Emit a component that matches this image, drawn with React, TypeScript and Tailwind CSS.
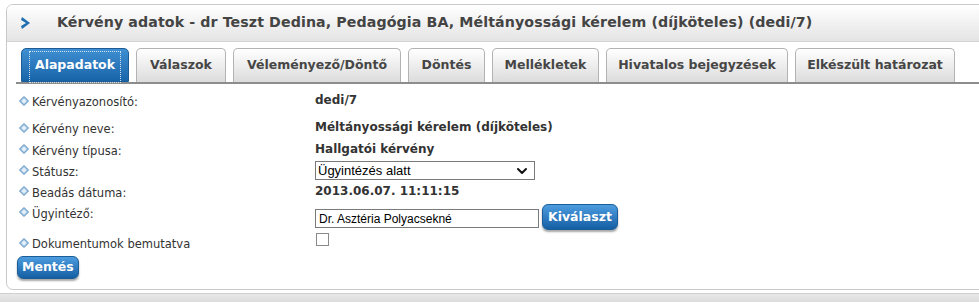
import { ChevronDown } from "lucide-react";

const tabs = [
  { label: "Alapadatok", w: "w-[108px]" },
  { label: "Válaszok", w: "w-[90px]" },
  { label: "Véleményező/Döntő", w: "w-[168px]" },
  { label: "Döntés", w: "w-[77px]" },
  { label: "Mellékletek", w: "w-[107px]" },
  { label: "Hivatalos bejegyzések", w: "w-[182px]" },
  { label: "Elkészült határozat", w: "w-[160px]" },
];

function Bullet() {
  return (
    <svg width="10" height="10" viewBox="0 0 10 10" className="shrink-0 mb-[3px]">
      <path d="M5 0.5 L9.5 5 L5 9.5 L0.5 5 Z" fill="#a9c8e4" stroke="#5b8fbf" strokeWidth="1" />
      <path d="M5 2.5 L7.5 5 L5 7.5 L2.5 5 Z" fill="#e4f0fa" />
    </svg>
  );
}

function Label({ text }: { text: string }) {
  return (
    <div className="flex items-center gap-[3px] w-[297px] pl-[1px] pt-[4px] h-[21px] text-[11.5px]">
      <Bullet />
      <span className="pt-[2px]">{text}</span>
    </div>
  );
}

function Row({ label, children, h = "h-[21px]" }: { label: string; children?: React.ReactNode; h?: string }) {
  return (
    <div className={`flex items-center ${h}`}>
      <Label text={label} />
      <div className="font-bold text-[12px] text-[#333]">{children}</div>
    </div>
  );
}

export default function App() {
  return (
    <div className="w-[979px] h-[302px] bg-white overflow-hidden text-[13px] text-[#333] font-['DejaVu_Sans',Verdana,sans-serif]">
      <div className="pt-[4px] pl-[6px]">
        <div className="w-[990px] h-[286px] border border-[#c9c9c9] rounded-[7px] bg-white overflow-hidden">
          {/* header */}
          <div className="h-[37px] flex items-center border-b border-[#d4d4d4] bg-gradient-to-b from-white to-[#e4e4e4]">
            <svg width="12" height="14" viewBox="0 0 12 14" className="ml-[13px] mr-[25px]">
              <path d="M2 1 L10 7 L2 13 L1 10 L6 7 L1 4 Z" fill="#1f6fb3" />
            </svg>
            <span className="font-bold text-[14.2px] text-[#444] tracking-[0.1px]">
              Kérvény adatok - dr Teszt Dedina, Pedagógia BA, Méltányossági kérelem (díjköteles) (dedi/7)
            </span>
          </div>

          {/* tabs */}
          <div className="pl-[9px] pt-[6px] pr-[10px]">
            <div className="flex gap-[7px] items-end border-b-2 border-[#8d8d8d] pl-[5px]">
              {tabs.map((t, i) =>
                i === 0 ? (
                  <div
                    key={t.label}
                    className={`${t.w} h-[34px] rounded-t-[5px] border border-[#1c5d97] bg-gradient-to-b from-[#3f8fd2] to-[#1864a8] flex items-center justify-center font-bold text-[12.5px] text-white relative`}
                  >
                    <span className="absolute left-[7px] right-[7px] top-[2px] bottom-[-2px] border border-dotted border-[#cfe2f2]" />
                    {t.label}
                  </div>
                ) : (
                  <div
                    key={t.label}
                    className={`${t.w} h-[34px] rounded-t-[5px] border border-b-0 border-[#b3b3b3] bg-gradient-to-b from-white to-[#dcdcdc] flex items-center justify-center font-bold text-[12.5px] text-[#464646]`}
                  >
                    {t.label}
                  </div>
                )
              )}
            </div>
          </div>

          {/* body */}
          <div className="pl-[11px] pt-[5px]">
            <Row label="Kérvényazonosító:" h="h-[22px]">dedi/7</Row>
            <div className="mt-[5px]">
              <Row label="Kérvény neve:" h="h-[22px]">Méltányossági kérelem (díjköteles)</Row>
            </div>
            <Row label="Kérvény típusa:">Hallgatói kérvény</Row>
            <Row label="Státusz:">
              <div className="w-[220px] h-[19px] mt-[2px] border border-[#7a7a7a] bg-white flex items-center justify-between pl-[2px] pr-[4px] font-normal text-black text-[13px] font-['Liberation_Sans',Arial,sans-serif]">
                <span>Ügyintézés alatt</span>
                <ChevronDown size={16} strokeWidth={3} color="#111" />
              </div>
            </Row>
            <Row label="Beadás dátuma:">2013.06.07. 11:11:15</Row>
            <div className="flex items-start h-[31px]">
              <Label text="Ügyintéző:" />
              <div className="flex items-start gap-[3px]">
                <div className="w-[224px] h-[19px] mt-[8px] border border-[#7a7a7a] bg-white flex items-center pl-[3px] text-[12px] text-black font-['Liberation_Sans',Arial,sans-serif]">
                  Dr. Asztéria Polyacsekné
                </div>
                <button className="mt-[3px] h-[26px] px-[5px] rounded-[6px] border border-[#1a5d97] bg-gradient-to-b from-[#4c9de0] to-[#145ea3] text-white font-bold text-[12.5px] shadow-[0_2px_2px_rgba(0,0,0,0.35)]">
                  Kiválaszt
                </button>
              </div>
            </div>
            <div className="flex items-start h-[20px]">
              <div className="flex items-center h-[20px]">
                <Label text="Dokumentumok bemutatva" />
              </div>
              <div className="w-[13px] h-[13px] border border-[#8a8a8a] bg-white ml-[1px] mt-[1px]" />
            </div>
            <button className="ml-[-1px] mt-[4px] h-[23px] px-[4px] rounded-[6px] border border-[#1a5d97] bg-gradient-to-b from-[#4c9de0] to-[#145ea3] text-white font-bold text-[12.5px] shadow-[0_2px_2px_rgba(0,0,0,0.35)]">
              Mentés
            </button>
          </div>
        </div>
      </div>
      <div className="mt-[3px] h-[12px] border-t border-[#cfcfcf] bg-gradient-to-b from-[#e8e8e8] to-[#d8d8d8]" />
    </div>
  );
}
